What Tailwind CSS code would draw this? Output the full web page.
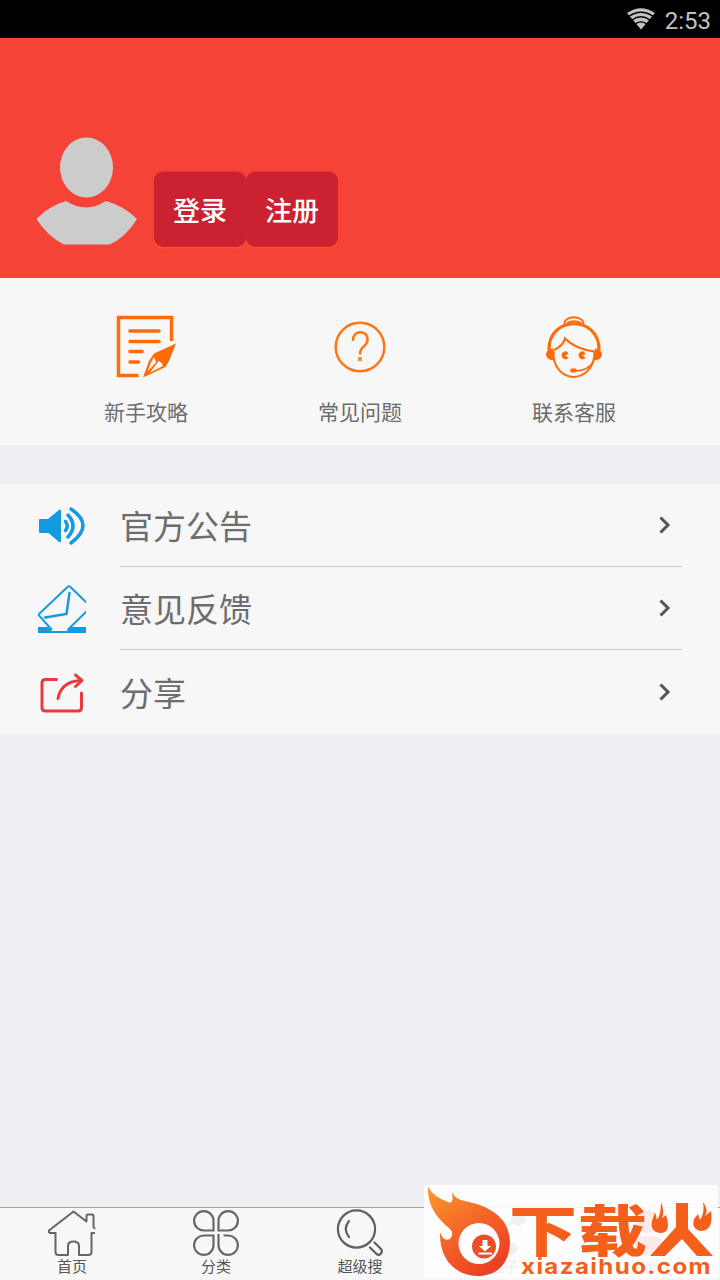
<!DOCTYPE html>
<html lang="zh-CN">
<head>
<meta charset="utf-8">
<meta name="viewport" content="width=720">
<title>我的</title>
<script src="https://cdn.jsdelivr.net/npm/@tailwindcss/browser@4"></script>
</head>
<body class="w-[720px] h-[1280px] overflow-hidden bg-[#efeef4] font-['Noto_Sans_CJK_SC',sans-serif] text-[#6d6d6d]">
<div class="relative flex h-full flex-col">
  <!-- status bar -->
  <div class="flex h-[38px] shrink-0 items-center justify-end bg-black pr-[9px] text-[#c2c2c2]">
    <svg class="mr-[9px] h-[22px] w-[30px]" viewBox="0 0 30 22" fill="none" stroke="#c2c2c2">
      <path d="M1 5Q15-4.500 29 5L15 21.500Z" fill="#c2c2c2" stroke="none"/>
      <path d="M3 8.300Q15 .2 27 8.300M6 12Q15 5.500 24 12M9.500 15.800Q15 12 20.500 15.800" stroke="#000" stroke-width="1.300"/>
    </svg>
    <span class="pt-[3px] font-[Roboto] text-[24px] leading-[36px]">2:53</span>
  </div>

  <!-- account header -->
  <header class="flex h-[240px] shrink-0 items-end bg-[#f64337] pl-9">
    <svg class="mb-[31px] h-[112px] w-[101px]" viewBox="36 135 101 112" fill="#ccc">
      <ellipse cx="86.500" cy="167.500" rx="26.500" ry="30"/>
      <path d="M36.500 219Q49 206 66 201Q86 214 106 201Q124 206 137 219Q126 237 110 244.500H64Q48 237 36.500 219Z"/>
    </svg>
    <div class="mb-[31px] ml-[17px] flex text-[27px] font-medium text-white">
      <button class="flex h-[75px] w-[92px] items-center justify-center rounded-[9px] bg-[#cc2131] pt-[1px] shadow-[0_1.500px_0_#fb5724,0_-1px_0_#e72f35]">登录</button>
      <button class="flex h-[75px] w-[92px] items-center justify-center rounded-[9px] bg-[#cc2131] pt-[1px] shadow-[0_1.500px_0_#fb5724,0_-1px_0_#e72f35]">注册</button>
    </div>
  </header>

  <!-- shortcuts -->
  <section class="grid h-[167px] shrink-0 grid-cols-3 bg-[#f7f7f7] px-[39px] pt-[37px] text-[21px] leading-[30px]">
    <div class="flex flex-col items-center">
      <svg class="h-16 w-16" viewBox="114 315 64 64" fill="none" stroke="#ff6b08" stroke-width="3">
        <path d="M171.500 341V317.500H118.500V375.500H138.500" stroke-width="3.500"/>
        <path d="M130 331H159M130 341.500H159M130 351.500H142M130 362H138.500" stroke-width="3.600" stroke-linecap="round"/>
        <path d="M176 343.500L154 353.500L149 361L143 377.500L165.500 367L169 361Z" fill="#ff6b08" stroke="none"/>
        <path d="M154 357L151 362.500L147.500 371.500L155 363.500Q157 362 155 360ZM156.500 364L150 372.500L163 366L161.500 363Q159 361 158.500 361Z" fill="#f7f7f7" stroke="none"/>
      </svg>
      <span class="mt-[17px]">新手攻略</span>
    </div>
    <div class="flex flex-col items-center">
      <svg class="h-16 w-16" viewBox="328 315 64 64" fill="none" stroke="#ff7416" stroke-width="2.500">
        <circle cx="360" cy="347" r="24.300"/>
        <path d="M353 341C352 330 367.500 329 367.500 339.500C367.500 347 359.500 346 360 354.500" stroke-width="2.500"/>
        <rect x="358" y="357" width="4" height="4" fill="#ff8b3c" stroke="none"/>
      </svg>
      <span class="mt-[17px]">常见问题</span>
    </div>
    <div class="flex flex-col items-center">
      <svg class="h-16 w-16" viewBox="542 315 64 64" fill="none" stroke="#ff6b08" stroke-width="2">
        <path d="M564.500 324C564 315 583.500 315 583.500 324M567 323Q574 319.500 581 323" stroke-width="1.900"/>
        <path d="M549 350C548 315 600 315 599 350" stroke-width="3.200"/>
        <path d="M553.500 351C552 385.500 595 385.500 594.500 351" stroke-width="2"/>
        <path d="M554 350Q563 346 565 338.500Q575 349 594.500 351.500" stroke-width="2.200"/>
        <path d="M553 348.500Q546 349 546 355Q547 360 554 360.500ZM595 348.500Q602 349 602 355Q601 360 594 360.500Z" fill="#ff6b08" stroke="none"/>
        <path d="M567 351.500A4 4 0 1 0 568.500 358L565.500 355.500L568.500 354ZM584 351.500A4 4 0 1 0 585.500 358L582.500 355.500L585.500 354Z" fill="#ff6b08" stroke="none"/>
        <path d="M594 361Q588 371 575 371" stroke-width="1.600"/>
        <ellipse cx="573.500" cy="370.500" rx="3.300" ry="2.200" fill="#ff6b08" stroke="none"/>
      </svg>
      <span class="mt-[17px]">联系客服</span>
    </div>
  </section>

  <!-- menu -->
  <section class="mt-[39px] h-[250px] shrink-0 bg-[#f7f7f7] pr-[38px] pl-[38px] text-[33px]">
    <div class="flex h-[83px]">
      <svg class="mt-[18px] h-12 w-12" viewBox="38 502 48 48" fill="none" stroke="#159adf" stroke-width="3.500" stroke-linecap="round">
        <path d="M40 519H48L59.500 509.500Q61 509 61 511V541Q61 543 59 542L48.500 533H40Q39 533 39 532V520Q39 519 40 519Z" fill="#159adf" stroke="none"/>
        <path d="M65.500 521.500Q69 526 65.500 530.500M68 515Q78 526 68 537M71 509Q95 525 71 543"/>
      </svg>
      <div class="ml-[34px] flex flex-1 items-center justify-between border-b border-[#c8c7cc] pr-[10px]">
        <span class="pt-[2px]">官方公告</span>
        <svg class="h-5 w-[15px]" viewBox="0 0 15 20" fill="none" stroke="#555" stroke-width="3"><path d="M3.500 2.500L11 10L3.500 17.500"/></svg>
      </div>
    </div>
    <div class="flex h-[83px]">
      <svg class="mt-[18px] h-12 w-12" viewBox="38 585 48 48" fill="none" stroke="#159adf" stroke-width="2">
        <path d="M38 627H48L51.500 631H67L71 627H86V633H38Z" fill="#159adf" stroke="none"/>
        <path d="M52 630L39 615.500Q38.500 614.500 39 614L67.500 587Q69 585.500 70.500 587L87 603M87 611L67.500 630"/>
        <path d="M69.500 593L66.500 614L45 617.500" stroke-width="2.500" stroke-linecap="round"/>
      </svg>
      <div class="ml-[34px] flex flex-1 items-center justify-between border-b border-[#c8c7cc] pr-[10px]">
        <span class="pt-[2px]">意见反馈</span>
        <svg class="h-5 w-[15px]" viewBox="0 0 15 20" fill="none" stroke="#555" stroke-width="3"><path d="M3.500 2.500L11 10L3.500 17.500"/></svg>
      </div>
    </div>
    <div class="flex h-[84px]">
      <svg class="mt-[18px] h-12 w-12" viewBox="38 668 48 48" fill="none" stroke="#e93b3f" stroke-width="3" stroke-linecap="round" stroke-linejoin="round">
        <path d="M56.500 679.500H45.500Q42 679.500 42 683V707.500Q42 711 45.500 711H78Q81.500 711 81.500 707.500V693"/>
        <path d="M58 698.500Q61 682 80 680.500M75.500 675L82 680.500L75.500 686.500"/>
      </svg>
      <div class="ml-[34px] flex flex-1 items-center justify-between pr-[10px]">
        <span class="pt-[2px]">分享</span>
        <svg class="h-5 w-[15px]" viewBox="0 0 15 20" fill="none" stroke="#555" stroke-width="3"><path d="M3.500 2.500L11 10L3.500 17.500"/></svg>
      </div>
    </div>
  </section>

  <!-- tab bar -->
  <nav class="mt-auto grid h-[73px] shrink-0 grid-cols-5 border-t border-[#a5a5a8] bg-[#f7f7f7] pt-[1px] text-[15px] leading-[18px] text-[#555]">
    <div class="flex flex-col items-center">
      <svg class="h-12 w-12" viewBox="48 1209 48 48" fill="none" stroke="#666" stroke-width="2" stroke-linejoin="round">
        <path d="M49 1233V1230.500L73.500 1211.500L86.500 1221.500V1216Q86.500 1214.500 88 1214.500H92Q93.500 1214.500 93.500 1216V1227L95 1229M49 1233H55.500V1252Q55.500 1255 58.500 1255H68V1246Q68 1241.500 73.500 1241.500Q79 1241.500 79 1246V1255H88.500Q91.500 1255 91.500 1252V1233H95"/>
      </svg>
      <span>首页</span>
    </div>
    <div class="flex flex-col items-center">
      <svg class="h-12 w-12" viewBox="192 1209 48 48" fill="none" stroke="#666" stroke-width="2.200">
        <path d="M213.500 1230.500V1221A9.700 9.700 0 1 0 204 1230.500ZM218.500 1230.500V1221A9.700 9.700 0 1 1 228 1230.500ZM213.500 1235.500V1245A9.700 9.700 0 1 1 204 1235.500ZM218.500 1234V1245A9.700 9.700 0 1 0 228 1235.500H223.500"/>
      </svg>
      <span>分类</span>
    </div>
    <div class="flex flex-col items-center">
      <svg class="h-12 w-12" viewBox="336 1209 48 48" fill="none" stroke="#5f5f5f" stroke-width="2.200" stroke-linecap="round">
        <circle cx="356.500" cy="1229" r="18.600"/>
        <path d="M349 1221Q342.500 1229 349 1237M370 1247.500L376.500 1254Q378.500 1255.500 380.500 1254Q383 1251.500 381 1249L374.500 1242.500"/>
      </svg>
      <span>超级搜</span>
    </div>
    <div class="flex flex-col items-center">
      <svg class="h-12 w-12" viewBox="480 1209 48 48" fill="#666" stroke="#666" stroke-width="2.500">
        <path d="M489 1235L518 1219M489 1235L511 1249"/><circle cx="518.500" cy="1218.500" r="6"/><circle cx="488.500" cy="1236" r="6"/><circle cx="511" cy="1249" r="5"/>
      </svg>
      <span>圈子</span>
    </div>
    <div class="flex flex-col items-center text-[#e93b3f]">
      <svg class="h-12 w-12" viewBox="624 1209 48 48" fill="#e93b3f"><circle cx="648" cy="1222" r="11"/><path d="M632 1252Q632 1237 642 1236H654Q664 1237 664 1252Q648 1258 632 1252Z"/></svg>
      <span>我的</span>
    </div>
  </nav>

  <!-- site watermark over the tab bar -->
  <svg class="absolute top-[1185px] left-[424px] h-[93px] w-[294px] bg-white/90" viewBox="424 1185 294 93" fill="#f4601c">
    <defs><linearGradient id="fire" x1="0" y1="0" x2=".65" y2="1"><stop offset="0" stop-color="#fb9b2b"/><stop offset=".55" stop-color="#f46328"/><stop offset="1" stop-color="#ec4124"/></linearGradient></defs>
    <path d="M428 1187Q434 1197 448 1202Q454 1205 452 1192Q456 1200 465 1201Q510 1210 510 1243C509 1266 495 1276 477 1276C453 1275 439 1257 440 1232Q443 1242 450 1239Q455 1233 449 1228Q427 1211 428 1187Z" fill="url(#fire)"/>
    <circle cx="479" cy="1243.500" r="20.500" fill="#fff"/>
    <circle cx="484" cy="1246.500" r="12" fill="#ed4e2a"/>
    <path d="M482.500 1240H487.500V1246H491L485 1251.500L479 1246H482.500ZM478.500 1252.500H492V1254.500H478.500Z" fill="#fff"/>
    <text x="509" y="1250.500" font-size="55" font-weight="900" textLength="68" lengthAdjust="spacingAndGlyphs">下</text>
    <text x="578" y="1250.500" font-size="55" font-weight="900" textLength="69" lengthAdjust="spacingAndGlyphs">载</text>
    <path d="M676 1203H688V1229L713 1256H697L682 1239L665 1256H650L676 1227Z"/>
    <path d="M661 1202Q665 1212 662 1218L666 1215Q672 1233 660 1233Q650 1232 652 1221L655 1212L657 1220Q661 1215 661 1202ZM703 1202Q709 1210 705 1216L711 1211Q714 1230 701 1231Q691 1229 694 1219L698 1214L700 1220Q705 1213 703 1202Z"/>
    <text x="521" y="1273.500" font-family="Inter" font-size="20.500" font-weight="700" letter-spacing="1.200" textLength="191" lengthAdjust="spacingAndGlyphs">xiazaihuo.com</text>
  </svg>
</div>
</body>
</html>
